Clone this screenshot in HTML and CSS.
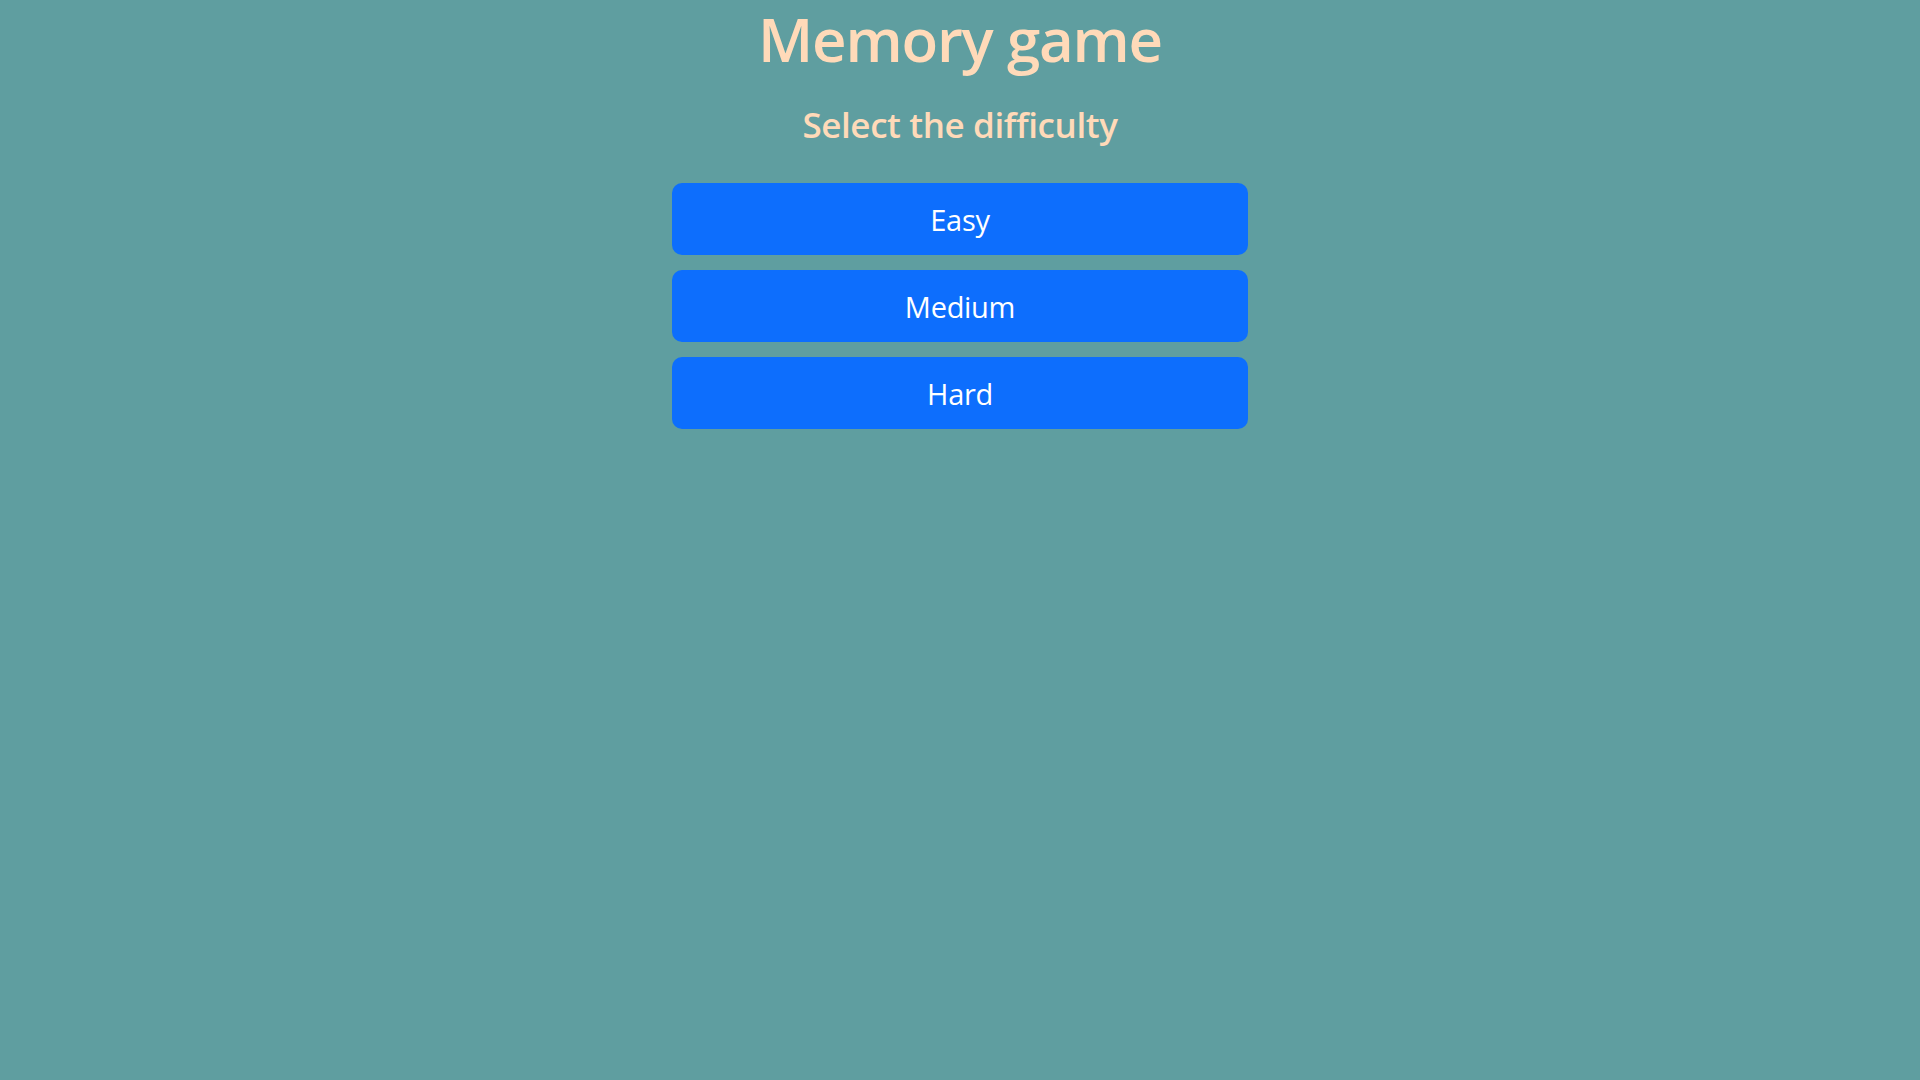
FILE: index.html
```html
<!DOCTYPE html>
<html lang="en">
<head>
<meta charset="utf-8">
<title>Memory game</title>
<link rel="stylesheet" href="styles.css">
</head>
<body>
<main class="menu">
  <h1 class="title">Memory game</h1>
  <h2 class="subtitle">Select the difficulty</h2>
  <div class="levels">
    <button class="level-btn">Easy</button>
    <button class="level-btn">Medium</button>
    <button class="level-btn">Hard</button>
  </div>
</main>
</body>
</html>
```
FILE: styles.css
```css
html, body {
  margin: 0;
  padding: 0;
  background: #5f9ea0;
  min-height: 100vh;
}
body {
  font-family: "Open Sans", "Noto Sans", sans-serif;
}
.menu {
  display: flex;
  flex-direction: column;
  align-items: center;
}
.title {
  margin: 0;
  height: 78px;
  line-height: 78px;
  font-size: 60px;
  font-weight: 600;
  color: #ffdab9;
  letter-spacing: -1.2px;
}
.subtitle {
  margin: 17px 0 0;
  height: 60px;
  line-height: 60px;
  font-size: 35px;
  font-weight: 600;
  color: #ffdab9;
  letter-spacing: -0.4px;
}
.levels {
  margin-top: 28px;
  width: 576px;
  display: flex;
  flex-direction: column;
  gap: 15px;
}
.level-btn {
  height: 72px;
  border: none;
  border-radius: 10px;
  background: #0d6efd;
  color: #ffffff;
  font-family: "Open Sans", "Noto Sans", sans-serif;
  font-size: 29px;
  letter-spacing: -0.3px;
  cursor: pointer;
}
```
